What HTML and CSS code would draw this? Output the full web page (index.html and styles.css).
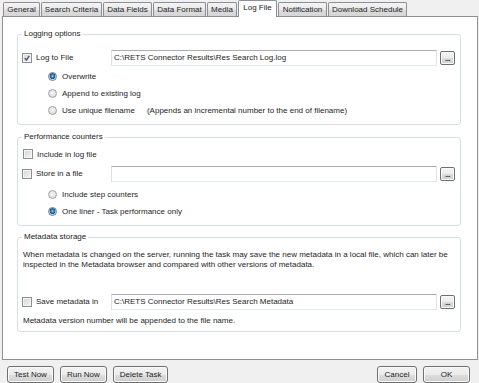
FILE: index.html
```html
<!DOCTYPE html>
<html>
<head>
<meta charset="utf-8">
<title>Log File</title>
<link rel="stylesheet" href="styles.css">
</head>
<body>
<div class="dialog">
  <div class="tabs">
    <div class="tab">General</div>
    <div class="tab">Search Criteria</div>
    <div class="tab">Data Fields</div>
    <div class="tab">Data Format</div>
    <div class="tab">Media</div>
    <div class="tab tab-active">Log File</div>
    <div class="tab">Notification</div>
    <div class="tab">Download Schedule</div>
  </div>

  <div class="panel">
    <fieldset class="group group-log">
      <legend>Logging options</legend>
      <div class="file-row first">
        <label class="check"><span class="box"><svg viewBox="0 0 10 10" class="tick"><path d="M2.2 5.2 L4.2 7.6 L7.9 2.3"/></svg></span>Log to File</label>
        <div class="textbox">C:\RETS Connector Results\Res Search Log.log</div>
        <span class="browse">...</span>
      </div>
      <div class="radio-row radios-first"><span class="radio on"></span>Overwrite</div>
      <div class="radio-row"><span class="radio"></span>Append to existing log</div>
      <div class="radio-row"><span class="radio"></span>Use unique filename<span class="hint">(Appends an incremental number to the end of filename)</span></div>
    </fieldset>

    <fieldset class="group group-perf">
      <legend>Performance counters</legend>
      <div class="check-row perf-first"><label class="check"><span class="box"></span>Include in log file</label></div>
      <div class="file-row perf-store">
        <label class="check"><span class="box"></span>Store in a file</label>
        <div class="textbox"></div>
        <span class="browse">...</span>
      </div>
      <div class="radio-row perf-radios"><span class="radio"></span>Include step counters</div>
      <div class="radio-row"><span class="radio on"></span>One liner - Task performance only</div>
    </fieldset>

    <fieldset class="group group-meta">
      <legend>Metadata storage</legend>
      <p class="desc">When metadata is changed on the server, running the task may save the new metadata in a local file, which can later be inspected in the Metadata browser and compared with other versions of metadata.</p>
      <div class="file-row meta-save">
        <label class="check"><span class="box"></span>Save metadata in</label>
        <div class="textbox">C:\RETS Connector Results\Res Search Metadata</div>
        <span class="browse">...</span>
      </div>
      <p class="note">Metadata version number will be appended to the file name.</p>
    </fieldset>
  </div>

  <div class="buttons">
    <span class="btn">Test Now</span>
    <span class="btn">Run Now</span>
    <span class="btn">Delete Task</span>
    <span class="btn btn-cancel">Cancel</span>
    <span class="btn btn-ok">OK</span>
  </div>
</div>
</body>
</html>
```
FILE: styles.css
```css
* { box-sizing: border-box; }
html, body {
  margin: 0;
  padding: 0;
  background: #f0f0f0;
}
body {
  width: 479px;
  height: 383px;
  overflow: hidden;
  font-family: "Liberation Sans", Arial, sans-serif;
  font-size: 8px;
  color: #1e1e1e;
}

/* tabs */
.tabs {
  display: grid;
  grid-template-columns: 37px 61px 49px 53px 30px 39px 49px 79px;
  column-gap: 1px;
  align-items: end;
  height: 16px;
  padding-left: 3px;
}
.tab {
  height: 14px;
  line-height: 13px;
  text-align: center;
  white-space: nowrap;
  border: 1px solid #8c8f96;
  border-bottom: none;
  border-radius: 2px 2px 0 0;
  background: linear-gradient(#f4f4f4, #e9e9e9 50%, #dcdcdc 51%, #d6d6d6);
  color: #222;
}
.tab-active {
  position: relative;
  z-index: 1;
  height: 17px;
  margin-bottom: -1px;
  line-height: 13px;
  background: #fff;
}

/* panel */
.panel {
  height: 344px;
  margin: 0 1px 0 2px;
  padding: 12px 16px 0 14px;
  background: #fff;
  border: 1px solid #8c8f96;
}

.group {
  margin: 0;
  padding: 0 5px 5px 4px;
  min-width: 0;
  border: 1px solid #d5dfe5;
  border-radius: 3px;
}
.group legend {
  padding: 0 2px;
  margin-left: 0;
  line-height: 10px;
  height: 10px;
  color: #222;
}
.group-perf { margin-top: 7px; }
.group-meta { margin-top: 6px; }

.file-row {
  display: flex;
  align-items: center;
  height: 17px;
}
.file-row.first { margin-top: 10px; }
.perf-store { margin-top: 3px; }
.meta-save { margin-top: 23px; }

.check {
  display: flex;
  align-items: center;
  width: 89px;
  flex: none;
  white-space: nowrap;
}
.check-row {
  display: flex;
  align-items: center;
  height: 16px;
}
.perf-first { margin-top: 4px; padding-left: 1px; }

.box {
  width: 10px;
  height: 10px;
  margin-right: 4px;
  flex: none;
  border: 1px solid #8f8f8f;
  box-shadow: inset 0 0 0 1px #f4f4f4;
  background: linear-gradient(135deg, #d3d3d3, #f7f7f7);
  display: flex;
  align-items: center;
  justify-content: center;
}
.tick {
  width: 8px;
  height: 8px;
  fill: none;
  stroke: #3b4f8c;
  stroke-width: 1.7;
}

.textbox {
  flex: 1;
  height: 16px;
  margin-right: 3px;
  padding: 0 2px;
  line-height: 14px;
  white-space: nowrap;
  overflow: hidden;
  background: #fff;
  border: 1px solid;
  border-color: #abadb3 #e2e3ea #e3e9ef #dbdfe6;
}
.browse {
  width: 15px;
  height: 14px;
  flex: none;
  border: 1px solid #707070;
  border-radius: 2px;
  background: linear-gradient(#f4f4f4, #ebebeb 50%, #dcdcdc 51%, #cfcfcf);
  box-shadow: inset 0 0 0 1px #fafafa;
  font-weight: bold;
  font-size: 8px;
  line-height: 13px;
  text-align: center;
  letter-spacing: -0.5px;
  color: #333;
}

.radio-row {
  display: flex;
  align-items: center;
  height: 17px;
  padding-left: 26px;
  white-space: nowrap;
}
.radios-first { margin-top: 2px; }
.perf-radios { margin-top: 4px; }
.radio {
  width: 9px;
  height: 9px;
  margin-right: 5px;
  flex: none;
  border-radius: 50%;
  border: 1px solid #a2a2a2;
  background: radial-gradient(circle at 50% 40%, #f6f6f6 0, #e4e4e4 55%, #cfcfcf 100%);
}
.radio.on {
  border-color: #6b7f95;
  background: radial-gradient(circle at 50% 45%, #a8dcf7 0, #3a93d2 1.2px, #1b4c86 2.6px, #dcdcdc 3.2px, #eeeeee 100%);
}
.hint { margin-left: 12px; }

.desc {
  margin: 8px 0 0 1px;
  line-height: 10px;
}
.note {
  margin: 6px 0 0 1px;
  line-height: 10px;
}

/* bottom buttons */
.buttons {
  display: flex;
  align-items: center;
  gap: 6px;
  margin-top: 6px;
  padding: 0 9px 0 7px;
}
.btn {
  height: 17px;
  min-width: 40px;
  padding: 0 6px;
  line-height: 15px;
  text-align: center;
  white-space: nowrap;
  border: 1px solid #707070;
  border-radius: 3px;
  background: linear-gradient(#f2f2f2, #ebebeb 50%, #dddddd 51%, #cfcfcf);
  box-shadow: inset 0 0 0 1px #fbfbfb;
  color: #1e1e1e;
}
.btn-cancel { margin-left: auto; }
.btn-ok { width: 47px; }
```
